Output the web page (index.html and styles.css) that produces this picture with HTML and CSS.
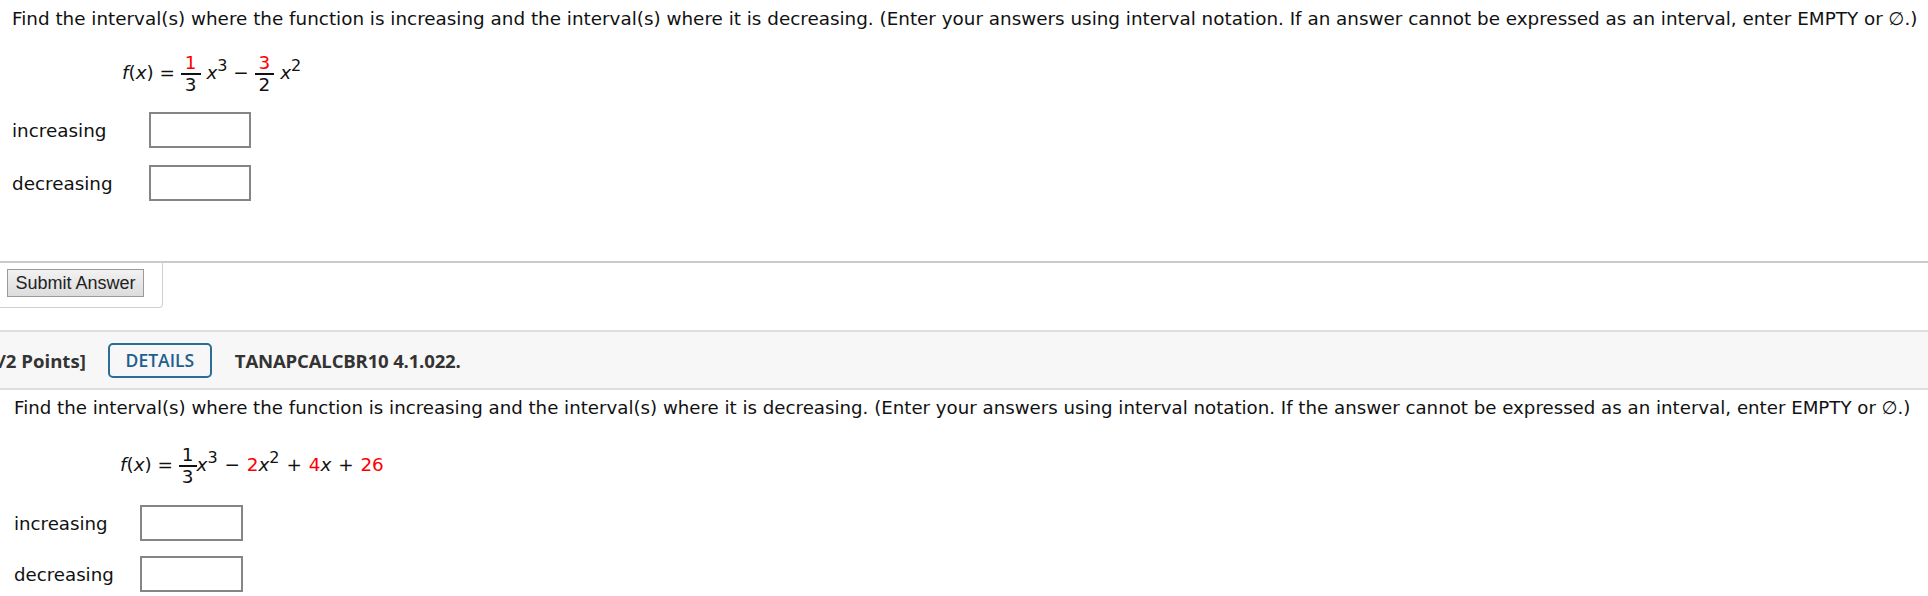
FILE: index.html
```html
<!DOCTYPE html>
<html>
<head>
<meta charset="utf-8">
<link rel="stylesheet" href="styles.css">
</head>
<body>
<section class="question q1">
  <p class="prompt">Find the interval(s) where the function is increasing and the interval(s) where it is decreasing. (Enter your answers using interval notation. If an answer cannot be expressed as an interval, enter EMPTY or &#8709;.)</p>
  <div class="eq eq1"><i>f</i>(<i>x</i>) = <span class="frac"><span class="num red">1</span><span class="den">3</span></span> <i>x</i><sup>3</sup> &minus; <span class="frac"><span class="num red">3</span><span class="den">2</span></span> <i>x</i><sup>2</sup></div>
  <div class="answers a1">
    <label>increasing</label><span class="box"></span>
    <label>decreasing</label><span class="box"></span>
  </div>
</section>
<div class="submit-line">
  <div class="tab"><button class="submit">Submit Answer</button></div>
</div>
<div class="qhead">
  <span class="points">[-/2 Points]</span>
  <span class="details">DETAILS</span>
  <span class="qid">TANAPCALCBR10 4.1.022.</span>
</div>
<section class="question q2">
  <p class="prompt">Find the interval(s) where the function is increasing and the interval(s) where it is decreasing. (Enter your answers using interval notation. If the answer cannot be expressed as an interval, enter EMPTY or &#8709;.)</p>
  <div class="eq eq2"><i>f</i>(<i>x</i>) = <span class="frac"><span class="num">1</span><span class="den">3</span></span><i>x</i><sup>3</sup> <span class="op">&minus;</span> <span class="red">2</span><i>x</i><sup>2</sup> <span class="op">+</span> <span class="red">4</span><i>x</i> <span class="op">+</span> <span class="red">26</span></div>
  <div class="answers a2">
    <label>increasing</label><span class="box"></span>
    <label>decreasing</label><span class="box"></span>
  </div>
</section>
</body>
</html>
```

FILE: styles.css
```css
html, body {
  margin: 0;
  padding: 0;
  background: #fff;
}
body {
  font-family: "DejaVu Sans", Verdana, sans-serif;
  font-size: 18.35px;
  color: #111;
  width: 1928px;
  overflow: hidden;
}
.q1 {
  padding-left: 12px;
}
.q2 {
  padding-left: 14px;
  font-size: 18.2px;
}
.prompt {
  margin: 0;
  line-height: 22px;
  white-space: nowrap;
}
.q1 .prompt {
  padding-top: 8px;
}
.eq {
  font-size: 18.4px;
  white-space: nowrap;
}
.eq1 {
  margin-left: 110px;
  margin-top: 17px;
  height: 52px;
  line-height: 52px;
}
.eq i {
  font-style: italic;
}
.red {
  color: #f00;
}
.frac {
  display: inline-flex;
  flex-direction: column;
  align-items: center;
  vertical-align: middle;
  line-height: 20px;
}
.frac .num {
  padding: 0 4px;
  border-bottom: 2px solid #111;
}
.eq2 .frac .num {
  padding: 0 3px;
}
.op {
  margin: 0 1px;
}
sup {
  font-size: 16px;
  line-height: 0;
  vertical-align: 8px;
}
.answers {
  display: grid;
  align-items: center;
}
.a1 {
  grid-template-columns: 137px 102px;
  margin-top: 13px;
  row-gap: 17px;
}
.a2 {
  grid-template-columns: 126px 103px;
  margin-top: 16px;
  row-gap: 15px;
}
.box {
  display: block;
  height: 32px;
  border: 2px solid #858585;
  background: #fff;
}
.submit-line {
  margin-top: 60px;
  border-top: 2px solid #cacaca;
}
.tab {
  width: 163px;
  box-sizing: border-box;
  border-right: 1px solid #cfcfcf;
  border-bottom: 1px solid #cfcfcf;
  border-bottom-right-radius: 4px;
  padding: 6px 0 10px 7px;
}
.submit {
  display: block;
  font-family: "Liberation Sans", Arial, sans-serif;
  font-size: 18px;
  color: #222;
  width: 137px;
  height: 28px;
  padding: 0;
  border: 1px solid #9a9a9a;
  background: linear-gradient(#f2f2f2, #dcdcdc);
  border-radius: 0;
}
.qhead {
  margin-top: 22px;
  height: 56px;
  border-top: 2px solid #dedede;
  border-bottom: 2px solid #dedede;
  background: #f7f7f7;
  display: flex;
  align-items: center;
  font-family: "Open Sans", sans-serif;
  font-weight: 700;
  font-size: 18.6px;
  color: #333;
}
.points {
  margin-left: -14px;
}
.details {
  margin-left: 22px;
  width: 104px;
  height: 35px;
  box-sizing: border-box;
  border: 2px solid #2b6c98;
  border-radius: 5px;
  color: #1e5f8e;
  font-weight: 600;
  font-size: 17.5px;
  display: flex;
  align-items: center;
  justify-content: center;
}
.qid {
  margin-left: 23px;
  letter-spacing: -0.2px;
}
.q2 .prompt {
  padding-top: 7px;
}
.eq2 {
  margin-left: 106px;
  margin-top: 22px;
  height: 48px;
  line-height: 48px;
}
```
